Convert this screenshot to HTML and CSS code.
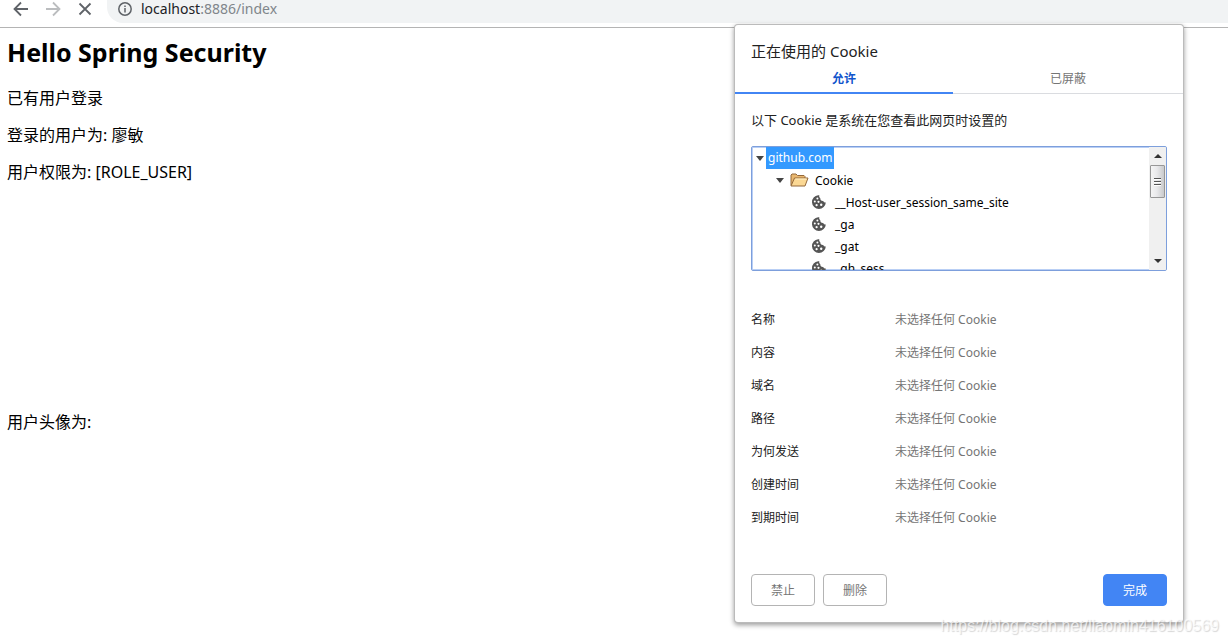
FILE: index.html
```
<!DOCTYPE html>
<html lang="zh-CN">
<head>
  <meta charset="UTF-8">
  <title>localhost:8886/index</title>
  <link rel="stylesheet" href="styles.css">
</head>
<body>
  <svg class="sprites" aria-hidden="true">
    <symbol id="cookie" viewBox="0 0 14 14">
      <path fill="#555" d="M6.2.2A6.9 6.9 0 1 0 13.8 7.4a2.4 2.4 0 0 1-2.6-1.5A2.7 2.7 0 0 1 8.3 3.2 2.5 2.5 0 0 1 7.4.2z"/>
      <g fill="#fff">
        <circle cx="5.4" cy="3.6" r="1"/>
        <circle cx="2.8" cy="6.4" r="1"/>
        <circle cx="6.5" cy="6.8" r="1.1"/>
        <circle cx="4.6" cy="10.2" r="1.1"/>
        <circle cx="9.2" cy="9.8" r="1.2"/>
      </g>
    </symbol>
  </svg>

  <header class="toolbar">
    <button class="nav" aria-label="Back">
      <svg width="16" height="16" viewBox="0 0 16 16"><path d="M15 8H2M8 1.5L1.5 8 8 14.5"/></svg>
    </button>
    <button class="nav" aria-label="Forward" disabled>
      <svg width="16" height="16" viewBox="0 0 16 16"><path d="M1 8h13M8 1.5L14.500 8 8 14.5"/></svg>
    </button>
    <button class="nav" aria-label="Stop">
      <svg width="16" height="16" viewBox="0 0 16 16"><path d="M2.500 2.500l11 11M13.500 2.500l-11 11"/></svg>
    </button>
    <div class="address">
      <svg width="14" height="14" viewBox="0 0 14 14">
        <circle cx="7" cy="7" r="6.200"/>
        <path d="M7 6v4.500M7 3.400v1.600"/>
      </svg>
      <div class="url" role="textbox" contenteditable="true" spellcheck="false" aria-label="URL">localhost<span>:8886/index</span></div>
    </div>
  </header>

  <main class="page">
    <h1>Hello Spring Security</h1>
    <p>已有用户登录</p>
    <p>登录的用户为: 廖敏</p>
    <p>用户权限为: [ROLE_USER]</p>
    <p class="avatar">用户头像为:</p>
  </main>

  <section class="dialog" role="dialog" aria-labelledby="dialog-title">
    <h2 id="dialog-title">正在使用的 Cookie</h2>
    <div class="tabs" role="tablist">
      <button class="tab active" role="tab" aria-selected="true">允许</button>
      <button class="tab" role="tab" aria-selected="false">已屏蔽</button>
    </div>
    <p class="intro">以下 Cookie 是系统在您查看此网页时设置的</p>

    <div class="tree-box">
      <ul class="tree">
        <li>
          <div class="row"><i class="caret"></i><span class="selected">github.com</span></div>
          <ul>
            <li>
              <div class="row">
                <i class="caret"></i>
                <svg class="folder" width="19" height="14" viewBox="0 0 19 14">
                  <path d="M1 12.5V2l1-1h4l1.5 1.5H14l1 1V5" fill="#e9b870" stroke="#94683a"/>
                  <path d="M1 13L4.5 5H18l-3 8z" fill="#fbd894" stroke="#94683a"/>
                  <path d="M5.3 6H16.5" stroke="#fff0c8"/>
                </svg>
                <span>Cookie</span>
              </div>
              <ul class="cookies">
                <li class="row"><svg class="cookie"><use href="#cookie"/></svg>__Host-user_session_same_site</li>
                <li class="row"><svg class="cookie"><use href="#cookie"/></svg>_ga</li>
                <li class="row"><svg class="cookie"><use href="#cookie"/></svg>_gat</li>
                <li class="row"><svg class="cookie"><use href="#cookie"/></svg>_gh_sess</li>
              </ul>
            </li>
          </ul>
        </li>
      </ul>
      <div class="scrollbar">
        <i class="arrow up"></i>
        <div class="thumb"></div>
        <i class="arrow down"></i>
      </div>
    </div>

    <table class="details">
      <tr><th scope="row">名称</th><td>未选择任何 Cookie</td></tr>
      <tr><th scope="row">内容</th><td>未选择任何 Cookie</td></tr>
      <tr><th scope="row">域名</th><td>未选择任何 Cookie</td></tr>
      <tr><th scope="row">路径</th><td>未选择任何 Cookie</td></tr>
      <tr><th scope="row">为何发送</th><td>未选择任何 Cookie</td></tr>
      <tr><th scope="row">创建时间</th><td>未选择任何 Cookie</td></tr>
      <tr><th scope="row">到期时间</th><td>未选择任何 Cookie</td></tr>
    </table>

    <div class="actions">
      <button class="btn">禁止</button>
      <button class="btn">删除</button>
      <button class="btn primary">完成</button>
    </div>
  </section>

  <div class="watermark">https://blog.csdn.net/liaomin416100569</div>
</body>
</html>
```
FILE: styles.css
```
* {
  box-sizing: border-box;
}
body {
  margin: 0;
  min-height: 100vh;
  position: relative;
  overflow: hidden;
  background: #fff;
  color: #000;
  font-family: "Noto Sans", "Noto Sans CJK SC", sans-serif;
  font-size: 16px;
}
button {
  font-family: inherit;
  cursor: pointer;
}
ul {
  list-style: none;
  margin: 0;
  padding: 0;
}
.sprites {
  position: absolute;
  width: 0;
  height: 0;
}

/* browser toolbar */
.toolbar {
  display: flex;
  align-items: flex-start;
  gap: 16px;
  height: 28px;
  padding-left: 13px;
  border-bottom: 1px solid #b4b4b4;
}
.nav {
  display: flex;
  padding: 1px 0 0;
  border: 0;
  background: none;
}
.nav svg {
  fill: none;
  stroke: #5f6368;
  stroke-width: 1.8;
}
.nav:disabled svg {
  stroke: #bbbdbf;
}
.address {
  flex: 1;
  display: flex;
  align-items: center;
  gap: 9px;
  height: 23px;
  margin-left: -2px;
  padding: 0 11px 5px;
  border-bottom-left-radius: 16px;
  background: #f1f3f4;
}
.address svg {
  fill: none;
  stroke: #5f6368;
  stroke-width: 1.5;
}
.url {
  color: #202124;
  font-size: 14px;
  line-height: 18px;
}
.url span {
  color: #80868b;
}

/* page content */
.page {
  padding: 8px 7px;
}
.page h1 {
  margin: 0 0 20px;
  font-size: 25px;
  line-height: 32px;
}
.page p {
  margin: 0 0 16px;
  line-height: 21px;
}
.page .avatar {
  margin-top: 229px;
}

/* cookie dialog */
.dialog {
  position: absolute;
  top: 25px;
  right: 45px;
  width: 448px;
  padding: 16px 0;
  border-radius: 3px;
  background: #fff;
  box-shadow: 0 0 0 1px #bbb, 0 2px 5px 1px rgba(0, 0, 0, 0.4);
  font-size: 12px;
}
.dialog h2 {
  margin: 0 16px 4px;
  color: #222;
  font-size: 15px;
  font-weight: normal;
  line-height: 20px;
}
.tabs {
  display: grid;
  grid-template-columns: 218px 1fr;
}
.tab {
  height: 29px;
  padding: 0 0 2px;
  border: 0;
  border-bottom: 1px solid #dadce0;
  background: none;
  color: #757575;
  font-size: 12px;
}
.tab.active {
  padding-bottom: 1px;
  border-bottom: 2px solid #4285f4;
  color: #1155cc;
  font-weight: bold;
}
.intro {
  margin: 16px;
  color: #222;
  font-size: 13px;
  line-height: 20px;
}
.tree-box {
  display: flex;
  height: 125px;
  margin: 0 16px 32px;
  border: 1px solid #7d9fdc;
  border-radius: 2px;
  box-shadow: inset 0 0 0 1px #b9cff5;
  overflow: hidden;
}
.tree {
  flex: 1;
  padding-left: 4px;
}
.tree ul {
  padding-left: 20px;
}
.tree .cookies {
  padding-left: 36px;
}
.row {
  display: flex;
  align-items: center;
  height: 22px;
  white-space: nowrap;
}
.caret {
  margin-right: 2px;
  border: 4px solid transparent;
  border-top: 5px solid #444;
  border-bottom: 0;
}
.selected {
  padding: 0 2px;
  background: #3399ff;
  color: #fff;
  line-height: 22px;
}
.folder {
  margin: 0 6px 0 4px;
}
.cookie {
  width: 14px;
  height: 14px;
  margin-right: 9px;
}
.scrollbar {
  display: flex;
  flex-direction: column;
  align-items: center;
  width: 17px;
  background: #f0f0f0;
}
.arrow {
  margin: 7px 0;
  border: 4px solid transparent;
}
.arrow.up {
  border-top: 0;
  border-bottom-color: #333;
}
.arrow.down {
  margin-top: auto;
  border-bottom: 0;
  border-top-color: #333;
}
.thumb {
  display: flex;
  align-items: center;
  justify-content: center;
  width: 15px;
  height: 33px;
  border: 1px solid #979797;
  border-radius: 1px;
  background: linear-gradient(90deg, #f5f5f5, #e9e9eb 45%, #c9cacc);
}
.thumb::before {
  content: "";
  width: 7px;
  height: 8px;
  background: repeating-linear-gradient(#555 0 1px, #fff 1px 2px, transparent 2px 3px);
}
.details {
  width: calc(100% - 32px);
  margin: 0 16px;
  border-collapse: collapse;
  line-height: 17px;
}
.details th,
.details td {
  height: 33px;
  padding: 0;
  text-align: left;
  font-weight: normal;
}
.details th {
  width: 144px;
  color: #222;
}
.details td {
  color: #757575;
}
.actions {
  display: flex;
  gap: 8px;
  padding: 40px 16px 0;
}
.btn {
  width: 64px;
  height: 32px;
  padding: 0;
  border: 1px solid #b4b4b4;
  border-radius: 4px;
  background: #fff;
  color: #757575;
  font-size: 12px;
}
.btn.primary {
  margin-left: auto;
  border-color: #4285f4;
  background: #4285f4;
  color: #fff;
}

.watermark {
  position: absolute;
  right: 9px;
  bottom: 8px;
  color: rgba(255, 255, 255, 0.7);
  font-family: "Liberation Sans", sans-serif;
  font-size: 16px;
  line-height: 20px;
  text-shadow: 1px 1px 1px rgba(0, 0, 0, 0.16);
}
```
